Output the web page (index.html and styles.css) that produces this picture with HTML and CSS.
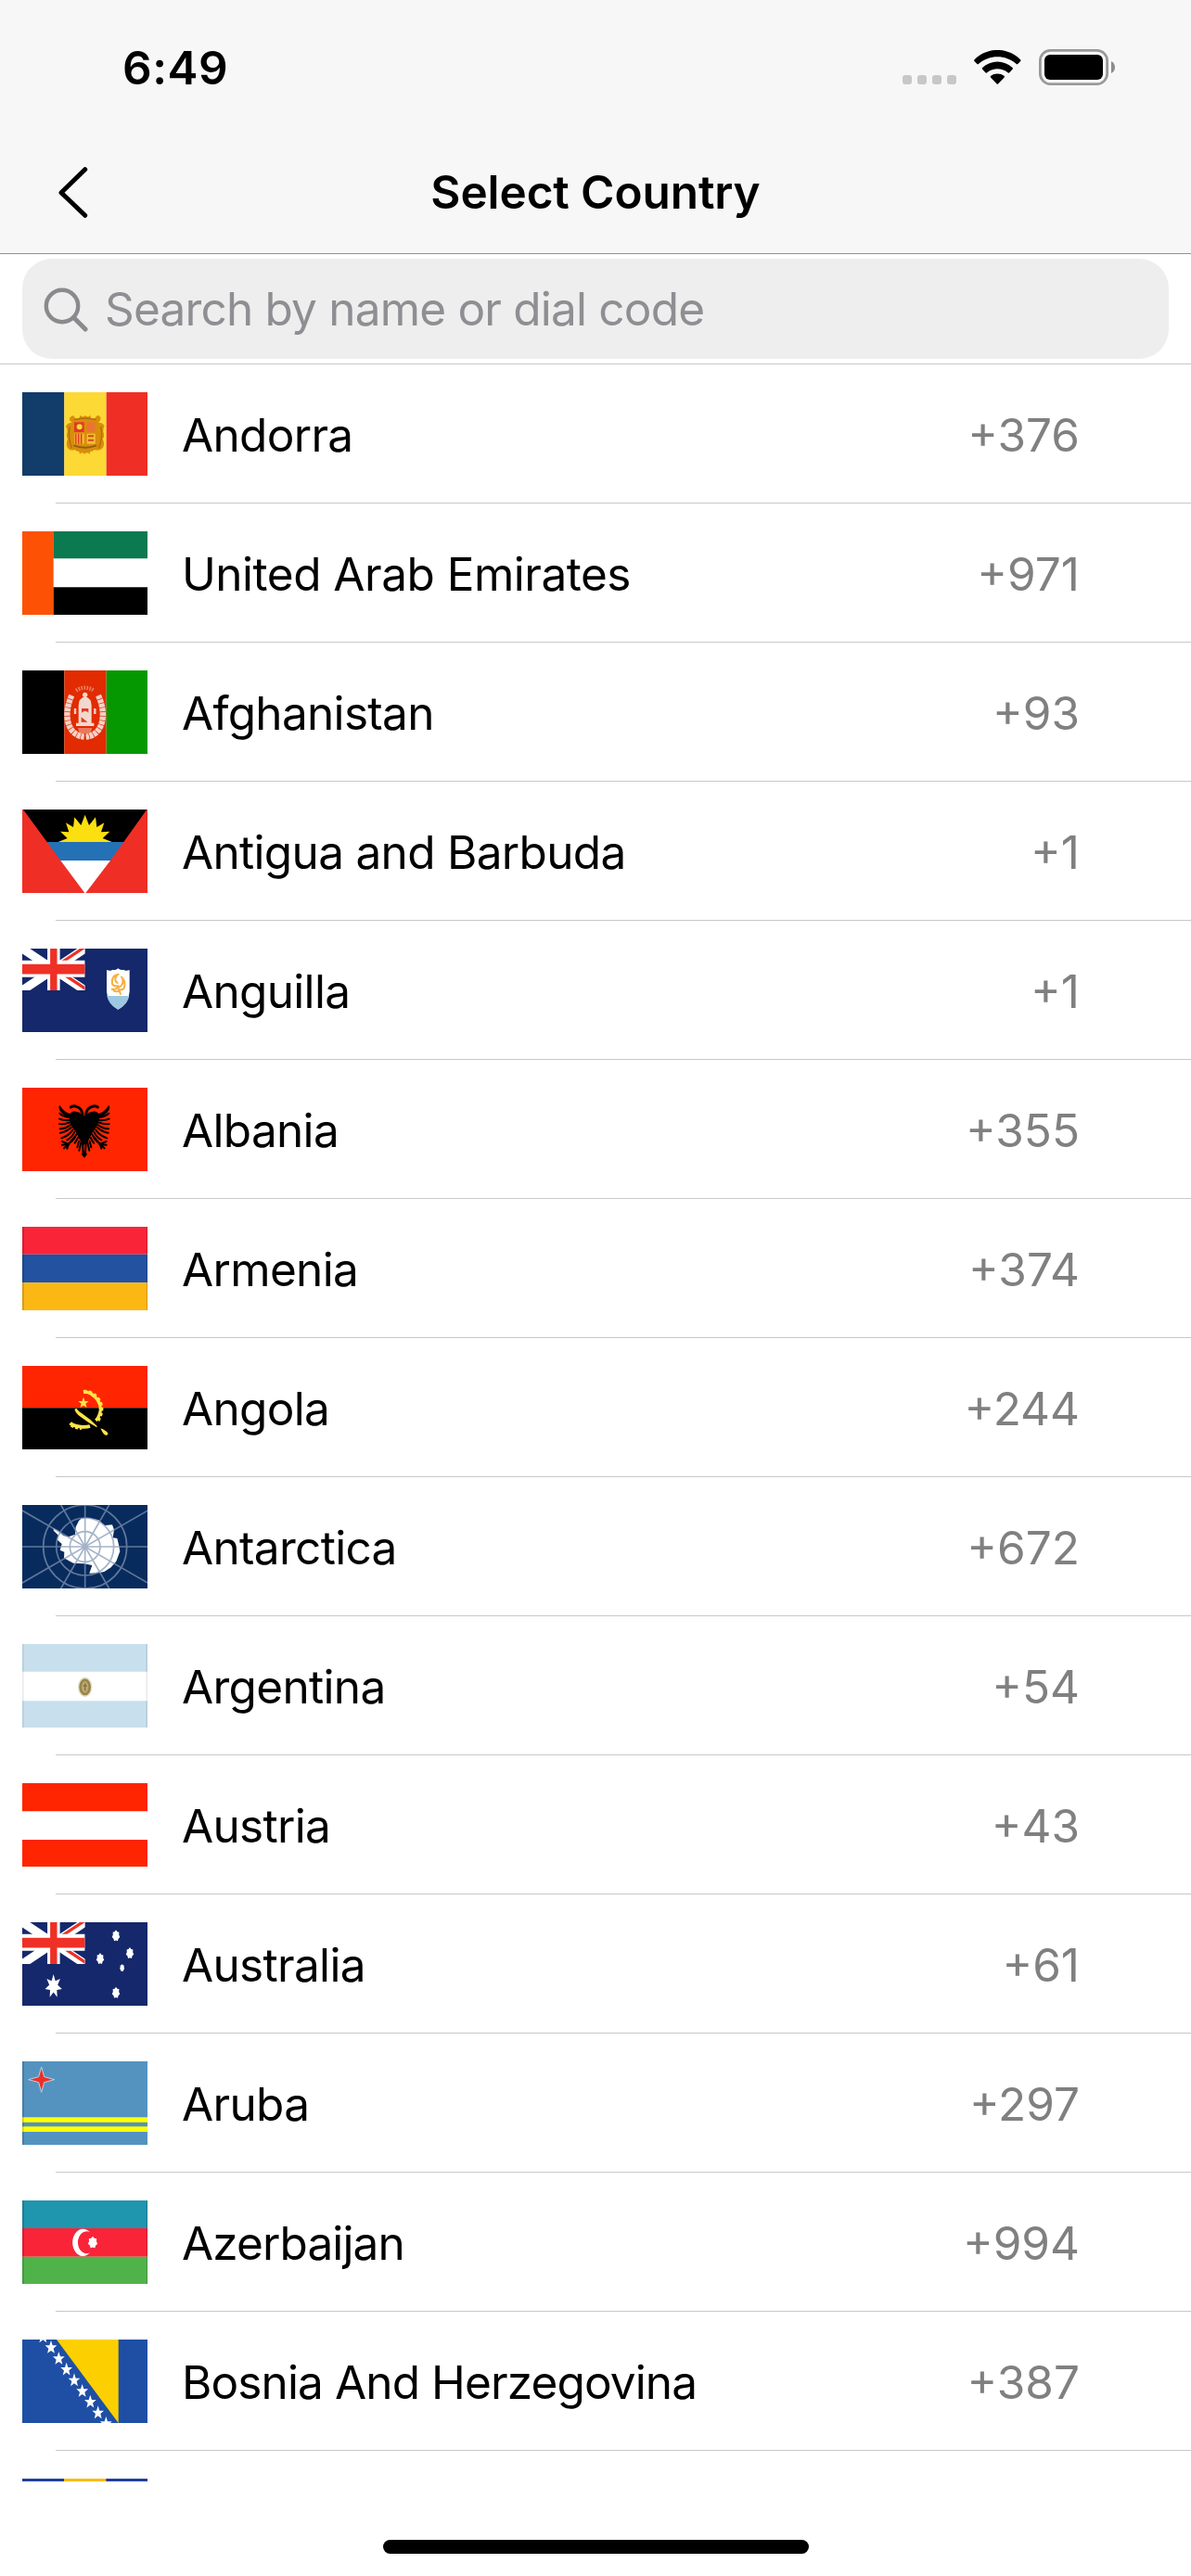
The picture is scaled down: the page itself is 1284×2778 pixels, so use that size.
FILE: index.html
```html
<!DOCTYPE html>
<html lang="en">
<head>
<meta charset="utf-8">
<title>Select Country</title>
<link rel="stylesheet" href="styles.css">
</head>
<body>
<svg class="defs" aria-hidden="true">
  <symbol id="star5" viewBox="-1 -1 2 2" preserveAspectRatio="none" overflow="visible"><path d="M0-1 .25-.309 .951-.309 .4.138 .588.809 0 .42-.588.809-.4.138-.951-.309-.25-.309z"/></symbol>
  <symbol id="star7" viewBox="-1 -1 2 2" preserveAspectRatio="none" overflow="visible"><path d="M0-1 .215-.445 .782-.623 .48-.11 .975.223 .39.31 .434.901 0 .5-.434.901-.39.31-.975.223-.48-.11-.782-.623-.215-.445z"/></symbol>
  <symbol id="dot7" viewBox="-1 -1 2 2" preserveAspectRatio="none" overflow="visible"><path d="M0-1 .33-.68 .782-.623 .74-.17 .975.223 .6.48 .434.901 0 .78-.434.901-.6.48-.975.223-.74-.17-.782-.623-.33-.68z"/></symbol>
  <symbol id="jack" viewBox="0 0 60 30" preserveAspectRatio="none">
    <clipPath id="jackClip"><path d="M30 15h30v15zv15H30zH0V15zV0h30z"/></clipPath>
    <path d="M0 0h60v30H0z" fill="#14286b"/>
    <path d="M0 0 60 30M60 0 0 30" stroke="#fff" stroke-width="6.6"/>
    <path d="M0 0 60 30M60 0 0 30" stroke="#ef3026" stroke-width="4.6" clip-path="url(#jackClip)"/>
    <path d="M30 0v30M0 14.5h60" stroke="#fff" stroke-width="12"/>
    <path d="M30 0v30" stroke="#ef3026" stroke-width="6.6"/><path d="M0 14.7h60" stroke="#ef3026" stroke-width="7.2"/>
  </symbol>
</svg>

<header class="header">
  <div class="status">
    <span class="time">6:49</span>
    <div class="indicators">
      <svg class="signal" viewBox="0 0 58 10"><g fill="#c7c7c7"><rect width="10" height="10" rx="3"/><rect x="16" width="10" height="10" rx="3"/><rect x="32" width="10" height="10" rx="3"/><rect x="48" width="10" height="10" rx="3"/></g></svg>
      <svg class="wifi" viewBox="331 72 152 111"><path d="M331 104C373 61 440 61 482 104Q483 106 481 108L473 116Q470 119 467 116C433 86 380 86 346 116Q343 119 340 116L332 108Q330 106 331 104zM357 130C386 103 427 103 456 130Q457 132 455 134L446 144Q443 148 439 144C420 129 393 129 374 144Q370 148 367 144L358 134Q356 132 357 130zM384 156C397 146 416 146 429 156Q430 158 428 161L409 181Q406.500 184 404 181L385 161Q383 158 384 156z"/></svg>
      <svg class="battery" viewBox="0 0 82 39"><rect x="1.400" y="1.400" width="72.200" height="36.200" rx="11" fill="none" stroke="#999" stroke-width="2.800"/><rect x="6" y="6" width="63" height="27" rx="6"/><path d="M78 13Q82 15 82 19.500T78 26z" fill="#8c8c8c"/></svg>
    </div>
  </div>
  <nav class="nav">
    <svg class="back" viewBox="0 0 34 56"><path d="M29.700 3.700 4 28.700 29.700 53.300" fill="none" stroke="#000" stroke-width="5" stroke-linecap="round" stroke-linejoin="round"/></svg>
    <h1 class="title">Select Country</h1>
  </nav>
</header>

<div class="search">
  <label class="field">
    <svg class="glass" viewBox="0 0 48 48"><circle cx="20" cy="20" r="17.200" fill="none" stroke="#8a8a8e" stroke-width="4.400"/><path d="M32.500 32.500 45 45" stroke="#8a8a8e" stroke-width="5" stroke-linecap="round"/></svg>
    <span class="placeholder">Search by name or dial code</span>
  </label>
</div>

<ul class="list">
  <li class="row">
    <svg class="flag" viewBox="72 69 405 270"><path fill="#123c69" d="M72 69h136v270H72z"/><path fill="#fcd935" d="M208 69h136v270H208z"/><path fill="#ef2f26" d="M344 69h133v270H344z"/>
      <path d="M260 143q8 10 16 1 8 9 16-1l2 10q10 6 20-8 8-4 12 8-2 10-8 14 14 0 20 10-6 10-4 20 6 14-2 22l4 12q2 16-8 22-10 6-22 2-6 6-14 6l-2 8q-8-8-16 0-8-8-16 0l-2-8q-8 0-14-6-12 4-20-2-8-8-6-22l3-12q-6-10-1-22 0-10-5-18 6-12 20-12-10-6-8-14 6-10 12-8 8 14 19 8z" fill="#d98d0c"/>
      <path d="M240 166h32v32h-32z" fill="#e0382c"/><circle cx="257" cy="181" r="9" fill="#fcd935"/><path d="M281 166h26v32h-26z" fill="#ec7432"/><path d="M240 203h32v33h-32z" fill="#f6c030"/><path d="M245 203v33M254 203v33M263 203v33" stroke="#e33d28" stroke-width="5"/><path d="M281 203h27v33h-27z" fill="#f5bd38"/><path d="M285 211h18M285 224h18" stroke="#cf4a1c" stroke-width="6"/><path d="M238 241q37 14 74 0" fill="none" stroke="#925e10" stroke-width="6"/><path d="M226 180q-8 30 6 70M326 180q8 30-6 70M240 158q35-10 70 0" fill="none" stroke="#b36b0b" stroke-width="4"/></svg>
    <span class="name">Andorra</span><span class="dial">+376</span>
  </li>
  <li class="row">
    <svg class="flag" viewBox="72 519 405 270"><path fill="#fff" d="M72 519h405v270H72z"/><path fill="#0b7a50" d="M172 519h305v88H172z"/><path d="M172 700h305v89H172z"/><path fill="#fd5205" d="M72 519h101v270H72z"/></svg>
    <span class="name loose">United Arab Emirates</span><span class="dial">+971</span>
  </li>
  <li class="row">
    <svg class="flag" viewBox="72 969 405 270"><path d="M72 969h136v270H72z"/><path fill="#e22b00" d="M208 969h136v270H208z"/><path fill="#059800" d="M344 969h133v270H344z"/>
      <g fill="none" stroke="#f3d2c8"><path d="M232 1050C204 1110 216 1178 272 1184M318 1050C346 1110 334 1178 278 1184" stroke-width="19" stroke-dasharray="12 2"/><path d="M246 1034q29-18 58 0" stroke-width="13" stroke-dasharray="5 4" opacity=".5"/><path d="M243 1092v18M307 1092v18" stroke-width="7"/></g>
      <g fill="#f3d8d0"><path d="M254 1083q0-24 21-30 21 6 21 30v56h8v10h-58v-10h8z"/><circle cx="275" cy="1048" r="8"/><path d="M252 1155h46l-5 18h-36z" opacity=".45"/></g><path d="M264 1092h22v14q-10-12-22 0zM263 1136v-16l20 16z" fill="#df3b1b"/></svg>
    <span class="name">Afghanistan</span><span class="dial">+93</span>
  </li>
  <li class="row">
    <svg class="flag" viewBox="72 69 405 270"><path fill="#ef2f26" d="M72 69h405v270H72z"/><path d="M75 69h400L400 174H152z"/><path fill="#2471b5" d="M152 174h248l-43 60H196z"/><path fill="#fff" d="M196 234h161l-80 105h-3z"/><path fill="#fcdf10" d="M188 174L218 162 195 140 223 142 213 112 237 126 241 94 262 120 275 86 288 120 309 94 313 126 337 112 327 142 355 140 332 162 362 174z"/></svg>
    <span class="name">Antigua and Barbuda</span><span class="dial">+1</span>
  </li>
  <li class="row">
    <svg class="flag" viewBox="72 519 405 270"><path fill="#14286b" d="M72 519h405v270H72z"/><use href="#jack" x="72" y="519" width="203" height="135"/>
      <path d="M345 588q12 5 20-1 10 3 17-4 7 7 17 4 8 6 20 1v70q-2 40-37 58-35-18-37-58z" fill="#fff"/><path d="M346 672h72q-5 28-36 44-31-16-36-44z" fill="#9ec8e2"/><path d="M383 602q-24 4-20 30 2 8 14 8M378 606q-12 14 2 24M393 611q16 14 8 36-6 8-18 4M397 620q2 18-12 24M362 650q16 4 20-10M368 656q8 4 18 0l4 10" fill="none" stroke="#f8ae3e" stroke-width="6" stroke-linecap="round"/></svg>
    <span class="name">Anguilla</span><span class="dial">+1</span>
  </li>
  <li class="row">
    <svg class="flag" viewBox="72 969 405 270"><path fill="#ff2500" d="M72 969h405v270H72z"/>
      <g id="eagleHalf"><path d="M272 1060q5 2 8-2 4-10 20-12 16-2 22 14-2 20-6 30-8 14-16 22-8 14-12 24-4 12-16 18z"/><path d="M278 1064q-2-28 20-34 10-4 18 2" fill="none" stroke="#000" stroke-width="9" stroke-linecap="round"/><path d="M312 1054q24-2 39-27l4 3-2 10q-12 20-30 26z"/><path d="M318 1066q20-2 34-14M320 1074q18 2 33-4M320 1082q16 6 33 4M318 1090q16 12 33 12M315 1098q16 14 35 17M310 1106q12 18 36 26M304 1112q8 18 24 26M298 1120q6 16 18 25M293 1130q4 10 10 18M300 1124l24 28M322 1152l22-9M324 1152l20 2M324 1154l4 12M324 1153l14 12M290 1142l5 20M283 1146l6 26M278 1140l-2 42" fill="none" stroke="#000" stroke-width="6" stroke-linecap="round"/></g>
      <use href="#eagleHalf" transform="matrix(-1 0 0 1 545 0)"/><path d="M263 1184l10-12 9 12-9 12z"/></svg>
    <span class="name">Albania</span><span class="dial">+355</span>
  </li>
  <li class="row">
    <svg class="flag" viewBox="72 69 405 270"><path fill="#fa2439" d="M72 69h405v89H72z"/><path fill="#2252a0" d="M72 158h405v92H72z"/><path fill="#fbb714" d="M72 250h405v89H72z"/><path class="edge" d="M72 69h5v270h-5zM474 69h3v270h-3z"/></svg>
    <span class="name">Armenia</span><span class="dial">+374</span>
  </li>
  <li class="row">
    <svg class="flag" viewBox="72 519 405 270"><path fill="#ff2500" d="M72 519h405v136H72z"/><path d="M72 655h405v134H72z"/>
      <g fill="none" stroke="#fde449"><path d="M270 604q14-2 24 5 32 20 31 53-2 20-15 34" stroke-width="10"/><path d="M270 603q16-2 26 5 34 20 32 54-2 20-13 36" stroke-width="12" stroke-dasharray="10 7"/><path d="M227 704q10 10 34 12 18 2 30-2" stroke-width="11"/><path d="M230 712q14 9 34 10" stroke-width="8" stroke-dasharray="9 6"/></g><path d="M241 660l6-4q8 12 18 17 30 20 50 42l-3 2q-30-16-50-32-16-10-21-25zM325 721l8 3q12 6 17 15l-5 5-8-3q-8-10-12-20z" fill="#fde449"/><use href="#star5" x="252" y="620" width="36" height="38" fill="#fde449"/></svg>
    <span class="name">Angola</span><span class="dial">+244</span>
  </li>
  <li class="row">
    <svg class="flag" viewBox="72 969 405 270"><path fill="#082b5e" d="M72 969h405v270H72z"/>
      <path fill="#fff" d="M172 1044l14 7 19 17 17 4 21-8 2-24 10-20 9-8 21-2 34 8 20 17 24-2 6 16-4 26 14 2 5 20 4 22-12 32-17 20-22 14-20 4-28 1 9-26-26-5-35-2-30-16 1-20-14-6 6-20-16-14 5-14-15-14z"/>
      <g fill="none" stroke="#8296b4" stroke-width="5" opacity=".72"><circle cx="275" cy="1104" r="49"/><circle cx="275" cy="1104" r="93"/><circle cx="275" cy="1104" r="135"/><path d="M72 1104h405M275 969v270M41 969l468 270M509 969 41 1239M197 969l156 270M353 969l-156 270"/></g></svg>
    <span class="name">Antarctica</span><span class="dial">+672</span>
  </li>
  <li class="row">
    <svg class="flag" viewBox="72 69 405 270"><path fill="#fff" d="M72 69h405v270H72z"/><path fill="#c8dfed" d="M72 69h405v89H72zM72 253h405v86H72z"/><path class="edge soft" d="M72 69h5v270h-5zM472 69h5v270h-5z"/><ellipse cx="275" cy="208" rx="23" ry="32" fill="#e3dcc5"/><ellipse cx="275" cy="208" rx="15" ry="23" fill="#b9aa78" stroke="#9b8548" stroke-width="8"/><path d="M275 196v24M269 204h12" stroke="#81703e" stroke-width="4"/></svg>
    <span class="name">Argentina</span><span class="dial">+54</span>
  </li>
  <li class="row">
    <svg class="flag" viewBox="72 519 405 270"><path fill="#fff" d="M72 519h405v270H72z"/><path fill="#ff2500" d="M72 519h405v91H72zM72 702h405v87H72z"/></svg>
    <span class="name">Austria</span><span class="dial">+43</span>
  </li>
  <li class="row">
    <svg class="flag" viewBox="72 969 405 270"><path fill="#14286b" d="M72 969h405v270H72z"/><use href="#jack" x="72" y="969" width="203" height="135"/>
      <g fill="#fff"><use href="#star7" x="145" y="1137" width="56" height="78"/><use href="#dot7" x="362" y="994" width="26" height="38"/><use href="#dot7" x="407" y="1050" width="26" height="38"/><use href="#dot7" x="311" y="1068" width="26" height="38"/><use href="#dot7" x="362" y="1178" width="26" height="38"/><use href="#dot7" x="387" y="1104" width="16" height="25"/></g></svg>
    <span class="name">Australia</span><span class="dial">+61</span>
  </li>
  <li class="row">
    <svg class="flag" viewBox="72 0 405 270"><path fill="#5493bf" d="M72 0h405v270H72z"/><path fill="#ff0" d="M72 181h405v16H72zM72 211h405v17H72z"/><path class="edge" d="M72 0h5v270h-5z"/><path d="M134 18l9 32 33 9-33 9-9 32-9-32-33-9 33-9z" fill="#ef2f26" stroke="#c3cfe0" stroke-width="3"/></svg>
    <span class="name">Aruba</span><span class="dial">+297</span>
  </li>
  <li class="row">
    <svg class="flag" viewBox="72 0 405 270"><path fill="#2095ae" d="M72 0h405v90H72z"/><path fill="#fa2439" d="M72 90h405v92H72z"/><path fill="#50b34a" d="M72 182h405v88H72z"/><path class="edge" d="M72 0h5v270h-5zM474 0h3v270h-3z"/><path d="M291 103A34 44 0 1 0 291 169 28 36 0 1 1 291 103z" fill="#fff"/><use href="#dot7" x="284" y="116" width="32" height="40" fill="#fff"/></svg>
    <span class="name tight">Azerbaijan</span><span class="dial">+994</span>
  </li>
  <li class="row">
    <svg class="flag" viewBox="72 0 405 270"><path fill="#1f4fa5" d="M72 0h405v270H72z"/><path fill="#fcd000" d="M183 0h200v270z"/>
      <g fill="#fff"><use href="#star5" x="119" y="-32" width="40" height="46"/><use href="#star5" x="145" y="3" width="40" height="46"/><use href="#star5" x="170" y="39" width="40" height="46"/><use href="#star5" x="195" y="74" width="40" height="46"/><use href="#star5" x="220" y="109" width="40" height="46"/><use href="#star5" x="246" y="144" width="40" height="46"/><use href="#star5" x="272" y="179" width="40" height="46"/><use href="#star5" x="297" y="214" width="40" height="46"/><use href="#star5" x="323" y="249" width="40" height="46"/></g></svg>
    <span class="name tight">Bosnia And Herzegovina</span><span class="dial">+387</span>
  </li>
  <li class="row">
    <svg class="flag" viewBox="0 0 405 270"><path fill="#233f9b" d="M0 0h405v270H0z"/><path fill="#fdbb12" d="M135 0h136v270H135z"/></svg>
  </li>
</ul>
<footer class="home"><div class="bar"></div></footer>
</body>
</html>
```
FILE: styles.css
```css
* { box-sizing: border-box; }
body {
  margin: 0;
  width: 1284px;
  height: 2778px;
  overflow: hidden;
  display: flex;
  flex-direction: column;
  background: #fff;
  color: #000;
  font-family: Inter, "Liberation Sans", sans-serif;
  font-size: 49.5px;
  line-height: 60px;
}
svg { display: block; flex: none; }
.defs { position: absolute; width: 0; height: 0; }

.header {
  height: 274px;
  background: #f7f7f7;
  border-bottom: 1px solid #8f8f91;
}
.status {
  height: 141px;
  display: flex;
  justify-content: space-between;
  align-items: flex-start;
  padding: 43px 82px 0 132px;
}
.time { font-weight: 600; letter-spacing: 0.5px; }
.indicators { display: flex; align-items: flex-end; padding-top: 10px; }
.signal { width: 58px; height: 10px; margin: 0 19px 1px 0; }
.wifi { width: 51px; height: 37px; margin: 0 19px 1px 0; }
.battery { width: 82px; height: 39px; }

.nav {
  height: 132px;
  display: grid;
  grid-template-columns: 100px 1fr 100px;
  align-items: center;
}
.back { width: 34px; height: 56px; margin-left: 62px; }
.title { margin: 0; font-size: inherit; font-weight: 600; letter-spacing: -0.1px; text-align: center; }

.search {
  height: 119px;
  padding: 5px 24px;
  border-bottom: 1px solid #c8c8ca;
}
.field {
  height: 108px;
  display: flex;
  align-items: center;
  padding: 0 23px;
  border-radius: 32px;
  background: #eee;
}
.glass { width: 48px; height: 48px; margin: 1px 18px 0 0; }
.placeholder { color: #8e8e93; letter-spacing: -0.8px; white-space: nowrap; }

.list {
  height: 2283px;
  margin: 0;
  padding: 0;
  overflow: hidden;
  list-style: none;
}
.row {
  height: 150px;
  display: flex;
  align-items: center;
  padding: 0 120px 0 24px;
  background: linear-gradient(#c8c8ca, #c8c8ca) 60px 100% / 1224px 1px no-repeat;
}
.flag { width: 135px; height: 90px; }
.edge { fill: #000; opacity: .17; }
.edge.soft { opacity: .08; }
.name { margin-left: 37px; padding-top: 2px; letter-spacing: -0.68px; white-space: nowrap; }
.name.tight { letter-spacing: -0.88px; }
.name.loose { letter-spacing: -0.5px; }
.dial { margin-left: auto; padding-top: 2px; color: #808080; }

.home { flex: 1; display: flex; justify-content: center; padding-top: 63px; }
.bar { width: 459px; height: 15px; border-radius: 8px; background: #000; }
```
